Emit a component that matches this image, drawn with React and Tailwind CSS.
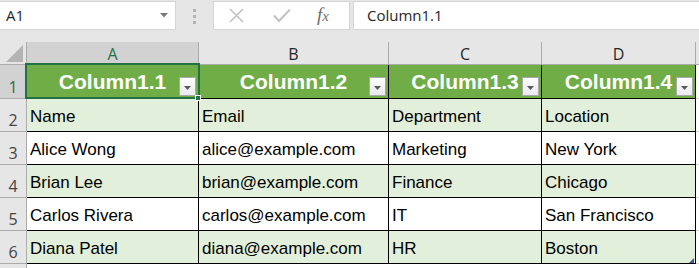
import React from "react";

const headers = ["Column1.1", "Column1.2", "Column1.3", "Column1.4"];
const letters = ["A", "B", "C", "D"];
const widths = ["w-[172px]", "w-[190px]", "w-[153px]", "w-[154px]"];
const rows = [
  ["Name", "Email", "Department", "Location"],
  ["Alice Wong", "alice@example.com", "Marketing", "New York"],
  ["Brian Lee", "brian@example.com", "Finance", "Chicago"],
  ["Carlos Rivera", "carlos@example.com", "IT", "San Francisco"],
  ["Diana Patel", "diana@example.com", "HR", "Boston"],
];

function FilterButton() {
  return (
    <div className="absolute right-[2px] bottom-[2px] w-[17px] h-[19px] border border-[#a9a9a9] bg-gradient-to-b from-[#ffffff] to-[#e9e9ee] flex items-center justify-center pt-[2px]">
      <svg width="7" height="4" viewBox="0 0 7 4">
        <path d="M0 0 H7 L3.5 4 Z" fill="#595959" />
      </svg>
    </div>
  );
}

export default function App() {
  return (
    <div className="relative w-[699px] h-[268px] overflow-hidden bg-[#e6e6e6] font-['Liberation_Sans',Arial,sans-serif]">
      {/* Toolbar */}
      <div className="h-[42px] flex items-start pt-[1px]">
        <div className="w-[176px] h-[29px] bg-white border border-l-0 border-[#d4d4d4] flex items-center justify-between pl-[6px] pr-[7px]">
          <span className="font-['Open_Sans',sans-serif] text-[15px] leading-[15px] text-[#262626]">A1</span>
          <svg width="8" height="5" viewBox="0 0 8 5">
            <path d="M0 0 H8 L4 4.5 Z" fill="#7a7a7a" />
          </svg>
        </div>
        <div className="w-[37px] h-[29px] flex flex-col items-center pt-[8px] gap-[3px]">
          <div className="w-[3px] h-[3px] bg-[#b3b3b3]" />
          <div className="w-[3px] h-[3px] bg-[#b3b3b3]" />
          <div className="w-[3px] h-[3px] bg-[#b3b3b3]" />
        </div>
        <div className="w-[137px] h-[29px] bg-white border border-[#d4d4d4] flex items-center">
          <svg className="ml-[15px]" width="15" height="15" viewBox="0 0 15 15">
            <path d="M1 1 L14 14 M14 1 L1 14" stroke="#c2c2c2" strokeWidth="1.6" />
          </svg>
          <svg className="ml-[29px]" width="18" height="15" viewBox="0 0 18 15">
            <path d="M1 7.5 L6 13 L17 1.5" stroke="#c2c2c2" strokeWidth="2" fill="none" />
          </svg>
          <span className="ml-[26px] font-['Liberation_Serif',serif] italic text-[19px] leading-[19px] text-[#6e6e6e]">
            f<span className="text-[15px]">x</span>
          </span>
        </div>
        <div className="ml-[3px] flex-1 h-[29px] bg-white border border-r-0 border-[#d4d4d4] flex items-center pl-[13px]">
          <span className="font-['Open_Sans',sans-serif] text-[15px] leading-[15px] text-[#262626]">Column1.1</span>
        </div>
      </div>

      {/* Column headers */}
      <div className="flex h-[23px] border-b border-[#ababab] font-['Open_Sans',sans-serif]">
        <div className="w-[27px] border-r border-[#ababab] flex items-end justify-end pr-[3px] pb-[2px]">
          <svg width="17" height="17" viewBox="0 0 17 17">
            <path d="M17 0 V17 H0 Z" fill="#b4b4b4" />
          </svg>
        </div>
        {letters.map((l, i) => (
          <div
            key={l}
            className={`${widths[i]} border-r border-[#ababab] flex items-end justify-center pb-[1px] text-[16px] leading-[18px] ${
              i === 0 ? "bg-[#d2d2d2] text-[#217346]" : "text-[#262626]"
            }`}
          >
            {l}
          </div>
        ))}
        <div className="flex-1" />
      </div>

      {/* Row 1 - table header */}
      <div className="flex h-[34px]">
        <div className="w-[27px] bg-[#d2d2d2] border-r border-b border-[#ababab] flex items-end justify-center pb-[3px] font-['Open_Sans',sans-serif] text-[16px] leading-[16px] text-[#217346]">
          1
        </div>
        {headers.map((h, i) => (
          <div
            key={h}
            className={`relative ${widths[i]} bg-[#70ad47] border-r border-b border-black flex items-center justify-center text-white font-bold text-[21px] leading-[21px]`}
          >
            <span>{h}</span>
            <FilterButton />
          </div>
        ))}
        <div className="flex-1 bg-white border-b border-[#d4d4d4]" />
      </div>

      {/* Data rows */}
      {rows.map((r, ri) => (
        <div key={ri} className="flex h-[33px]">
          <div className="w-[27px] border-r border-b border-[#ababab] flex items-end justify-center pb-[3px] font-['Open_Sans',sans-serif] text-[16px] leading-[16px] text-[#444444]">
            {ri + 2}
          </div>
          {r.map((c, ci) => (
            <div
              key={ci}
              className={`${widths[ci]} ${
                ri % 2 === 0 ? "bg-[#e2efda]" : "bg-white"
              } border-r border-b border-black flex items-center pl-[3px] pt-[2px] text-[17px] leading-[17px] text-black whitespace-nowrap overflow-hidden`}
            >
              {c}
            </div>
          ))}
          <div className="flex-1 bg-white border-b border-[#d4d4d4]" />
        </div>
      ))}

      {/* Row 7 */}
      <div className="flex h-[33px]">
        <div className="w-[27px] border-r border-[#ababab]" />
        <div className="flex-1 bg-white" />
      </div>

      {/* Selection overlay on A1 */}
      <div className="absolute left-[25px] top-[63px] w-[175px] h-[36px] border-2 border-[#217346]" />
      <div className="absolute left-[195px] top-[95px] w-[6px] h-[6px] bg-[#217346] border border-white" />
      {/* table resize handle */}
      <svg className="absolute left-[689px] top-[258px]" width="5" height="5" viewBox="0 0 5 5">
        <path d="M5 0 V5 H0 Z" fill="#3c5a9a" />
      </svg>
    </div>
  );
}
